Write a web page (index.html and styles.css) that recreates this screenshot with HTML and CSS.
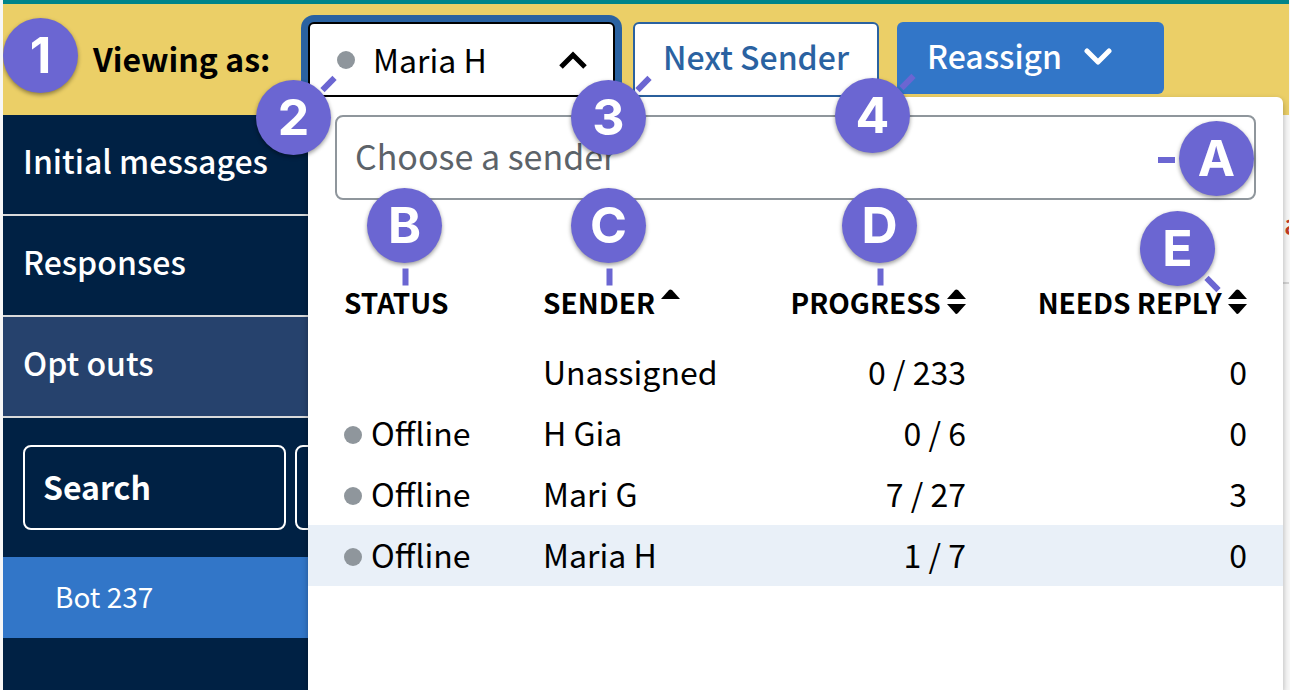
FILE: index.html
```html
<!DOCTYPE html>
<html lang="en">
    <head>
        <meta charset="utf-8">
        <title>Message review</title>
        <link rel="stylesheet" href="styles.css">
    </head>
    <body>
        <div class="page">
            <header class="banner">
                <span class="viewing" id="viewing-label">Viewing as:</span>
                <button class="sender-toggle" id="sender-toggle" aria-expanded="true" aria-labelledby="viewing-label sender-toggle">
                    <span class="dot"></span>
                    <span class="sender-name">Maria H</span>
                    <svg width="28" height="20" viewBox="0 0 28 20"><path d="M2 17 L14 5 L26 17" fill="none" stroke="#000" stroke-width="5"/></svg>
                </button>
                <button class="next">Next Sender</button>
                <button class="reassign">
                    Reassign
                    <svg width="28" height="20" viewBox="0 0 28 20"><path d="M3 4 L14 15 L25 4" fill="none" stroke="#fff" stroke-width="5" stroke-linecap="round" stroke-linejoin="round"/></svg>
                </button>
            </header>
            <div class="content">
                <nav class="sidebar">
                    <a href="#initial">Initial messages</a>
                    <a href="#responses">Responses</a>
                    <a href="#optouts" class="active">Opt outs</a>
                    <div class="filters">
                        <input type="text" class="search" placeholder="Search" aria-label="Search">
                        <button class="filter" aria-label="Filter"></button>
                    </div>
                    <a href="#bot" class="contact">Bot 237</a>
                </nav>
                <main class="thread">
                    <div class="thread-top"><span>a</span></div>
                </main>
            </div>

            <div class="panel">
                <input type="text" class="choose" placeholder="Choose a sender" aria-label="Choose a sender">
                <table class="senders">
                    <thead>
                        <tr>
                            <th class="status">Status</th>
                            <th class="sender">Sender <svg class="sort" width="19" height="26" viewBox="0 0 19 26"><path d="M0 10 L8 1 Q9 0 11 1 L19 10 Z"/></svg></th>
                            <th class="progress">Progress <svg class="sort" width="19" height="26" viewBox="0 0 19 26"><path d="M0 10 L8 1 Q9 0 11 1 L19 10 Z M0 15 H19 L11 24 Q9 26 8 24 Z"/></svg></th>
                            <th class="reply">Needs reply <svg class="sort" width="19" height="26" viewBox="0 0 19 26"><path d="M0 10 L8 1 Q9 0 11 1 L19 10 Z M0 15 H19 L11 24 Q9 26 8 24 Z"/></svg></th>
                        </tr>
                    </thead>
                    <tbody>
                        <tr>
                            <td></td>
                            <td>Unassigned</td>
                            <td class="number">0 / 233</td>
                            <td class="number">0</td>
                        </tr>
                        <tr>
                            <td><span class="dot"></span>Offline</td>
                            <td>H Gia</td>
                            <td class="number">0 / 6</td>
                            <td class="number">0</td>
                        </tr>
                        <tr>
                            <td><span class="dot"></span>Offline</td>
                            <td>Mari G</td>
                            <td class="number">7 / 27</td>
                            <td class="number">3</td>
                        </tr>
                        <tr class="selected">
                            <td><span class="dot"></span>Offline</td>
                            <td>Maria H</td>
                            <td class="number">1 / 7</td>
                            <td class="number">0</td>
                        </tr>
                    </tbody>
                </table>
            </div>

            <!-- numbered markers -->
            <div class="marker one">1</div>
            <div class="marker two up">2</div>
            <div class="marker three up">3</div>
            <div class="marker four up">4</div>
            <div class="marker a left">A</div>
            <div class="marker b down">B</div>
            <div class="marker c down">C</div>
            <div class="marker d down">D</div>
            <div class="marker e corner">E</div>
        </div>
    </body>
</html>
```
FILE: styles.css
```css
*{
    box-sizing: border-box;
}
body{
    margin: 0;
    background-color: #f7f7f7;
    font-family: 'Noto Sans CJK SC', 'Noto Sans', sans-serif;
    font-size: 32px;
    color: #000;
}
button, input{
    font: inherit;
}
a{
    text-decoration: none;
}

.page{
    position: relative;
    display: flex;
    flex-direction: column;
    min-height: 100vh;
    margin: 0 1px 0 3px;
    overflow: hidden;
}

.banner{
    display: flex;
    align-items: flex-start;
    gap: 18px;
    height: 115px;
    padding: 18px 18px 0 90px;
    border-top: 4px solid #008489;
    background-color: #ebcf67;
}
.viewing{
    flex: 0 0 197px;
    line-height: 73px;
    font-weight: bold;
    white-space: nowrap;
}
.banner button{
    display: flex;
    align-items: center;
    height: 75px;
    border-radius: 6px;
    white-space: nowrap;
}
.banner .sender-toggle{
    width: 307px;
    padding: 0 26px 0 27px;
    border: 2px solid #000;
    background-color: #fff;
    color: #000;
    box-shadow: 0 0 0 7px #2a62a1;
}
.sender-name{
    flex: 1;
    padding: 0 0 2px 18px;
    text-align: left;
}
.banner .next{
    width: 246px;
    justify-content: center;
    padding: 0 0 8px;
    border: 2px solid #2a62a1;
    background-color: #fff;
    color: #2a62a1;
    font-weight: 500;
}
.banner .reassign{
    width: 267px;
    height: 72px;
    gap: 22px;
    padding: 0 30px 6px;
    border: none;
    background-color: #3276c8;
    color: #fff;
    font-weight: 500;
}
.reassign svg{
    margin-top: 4px;
}
.dot{
    display: inline-block;
    width: 18px;
    height: 18px;
    border-radius: 50%;
    background-color: #8f969c;
}

.content{
    display: flex;
    flex: 1;
}
.sidebar{
    flex: 0 0 345px;
    background-color: #002144;
}
.sidebar a{
    display: block;
    height: 101px;
    padding-left: 20px;
    border-bottom: 2px solid #d9dadb;
    line-height: 91px;
    color: #fff;
    font-weight: 500;
}
.sidebar .active{
    background-color: #26426d;
}
.filters{
    display: flex;
    gap: 9px;
    padding: 27px 20px;
}
.search{
    width: 263px;
    height: 85px;
    padding: 0 18px 4px;
    border: 2px solid #fff;
    border-radius: 8px;
    background: none;
    color: #fff;
    font-weight: bold;
}
.search::placeholder{
    color: #fff;
    opacity: 1;
}
.filter{
    flex: 1;
    border: 2px solid #fff;
    border-radius: 8px;
    background: none;
}
.sidebar .contact{
    height: 81px;
    padding-left: 52px;
    border: none;
    background-color: #3276c8;
    line-height: 79px;
    font-size: 28px;
    font-weight: normal;
}

.thread{
    flex: 1;
    text-align: right;
}
.thread-top{
    height: 169px;
    padding-top: 84px;
    border-bottom: 2px solid #d4d4d4;
    color: #c23a22;
    font-size: 28px;
    font-weight: 500;
    line-height: 48px;
}
.thread-top span{
    margin-right: -11px;
}

.panel{
    position: absolute;
    top: 97px;
    right: 6px;
    bottom: 0;
    left: 305px;
    padding-top: 18px;
    border-radius: 0 6px 0 0;
    background-color: #fff;
    box-shadow: 0 3px 6px rgba(0, 0, 0, 0.3);
}
.choose{
    display: block;
    width: calc(100% - 54px);
    height: 85px;
    margin: 0 27px;
    padding: 0 18px 4px;
    border: 2px solid #8f969c;
    border-radius: 8px;
    font-size: 34px;
}
.choose::placeholder{
    color: #5c6369;
    opacity: 1;
}
.senders{
    width: 100%;
    margin-top: 62px;
    border-collapse: collapse;
    table-layout: fixed;
}
th{
    height: 80px;
    padding: 0;
    font-size: 28px;
    font-weight: bold;
    line-height: 40px;
    text-align: left;
    text-transform: uppercase;
    white-space: nowrap;
}
.sort{
    vertical-align: -1px;
}
td{
    height: 61px;
    padding: 0 0 4px;
    line-height: 40px;
    white-space: nowrap;
}
th:first-child, td:first-child{
    padding-left: 36px;
}
th:last-child, td:last-child{
    padding-right: 36px;
}
.status{
    width: 235px;
}
.sender{
    width: 201px;
}
.progress{
    width: 222px;
}
.progress, .reply, .number{
    text-align: right;
}
td .dot{
    margin-right: 9px;
    vertical-align: 2px;
}
.selected{
    background-color: #e9f0f8;
}

.marker{
    position: absolute;
    width: 75px;
    height: 75px;
    border-radius: 50%;
    background-color: #6b66d2;
    box-shadow: 0 2px 4px rgba(0, 0, 0, 0.4);
    color: #fff;
    font-family: Inter, sans-serif;
    font-size: 50px;
    font-weight: bold;
    line-height: 75px;
    text-align: center;
}
.one{ left: 0; top: 18px; }
.two{ left: 253px; top: 80px; }
.three{ left: 568px; top: 80px; }
.four{ left: 832px; top: 78px; }
.a{ right: 35px; top: 121px; }
.b{ left: 364px; top: 188px; }
.c{ left: 568px; top: 188px; }
.d{ left: 839px; top: 188px; }
.e{ right: 74px; top: 211px; }

/* short line pointing at the marked item */
.marker::after{
    position: absolute;
    width: 17px;
    height: 6px;
    background-color: #6b66d2;
}
.up::after{
    content: '';
    top: 1px;
    left: 64px;
    transform: rotate(-45deg);
}
.down::after{
    content: '';
    top: 86px;
    left: 30px;
    transform: rotate(90deg);
}
.left::after{
    content: '';
    top: 36px;
    left: -21px;
}
.corner::after{
    content: '';
    top: 70px;
    left: 64px;
    transform: rotate(45deg);
}
```
